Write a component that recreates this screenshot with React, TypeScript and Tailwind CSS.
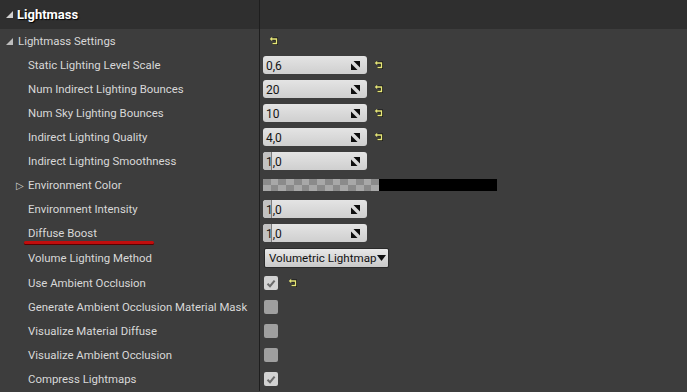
import React from 'react';

const ResetIcon: React.FC = () => (
    <svg width="11" height="10" viewBox="0 0 11 10" className="shrink-0">
        <path d="M2.5 3 H7.5 V7.5 H3.5" fill="none" stroke="#151515" strokeWidth="3" />
        <path d="M2.5 3 H7.5 V7.5 H3.5" fill="none" stroke="#e6e678" strokeWidth="1.4" />
        <path d="M0.8 3 L3.2 0.8 V5.2 Z" fill="#e6e678" />
    </svg>
)

const SpinIcon: React.FC = () => (
    <svg width="9" height="9" viewBox="0 0 9 9" className="shrink-0">
        <polygon points="0,2.5 0,9 6.5,9" fill="#0d0d0d" />
        <polygon points="2.5,0 9,0 9,6.5" fill="#0d0d0d" />
    </svg>
)

const NumberBox: React.FC<{ value: string; slider?: boolean }> = ({ value, slider }) => (
    <div className="relative flex h-[18px] w-[104px] items-center overflow-hidden rounded-[3px] bg-gradient-to-b from-[#e4e4e4] to-[#cfcfcf] pl-[3px] pr-[7px]">
        {slider && (
            <div className="absolute left-0 top-0 h-full w-[9px] border-r border-[#7d7d7d] bg-[#c2c2c2]" />
        )}
        <span className="relative flex-1 pt-px text-[12px] text-[#151515]">{value}</span>
        <SpinIcon />
    </div>
)

const CheckBox: React.FC<{ checked?: boolean }> = ({ checked }) => (
    <div className={`flex h-[14px] w-[14px] items-center justify-center rounded-[2px] ${checked ? 'bg-[#d2d2d2]' : 'bg-[#9f9f9f]'}`}>
        {checked && (
            <svg width="10" height="9" viewBox="0 0 10 9">
                <path d="M1.5 4.8 L4 7.2 L8.6 1.6" fill="none" stroke="#6a6a6a" strokeWidth="2" />
            </svg>
        )}
    </div>
)

type Row = {
    label: string;
    value: React.ReactNode;
    h?: string;
    expand?: boolean;
    mark?: boolean;
}

const rows: Row[] = [
    { label: 'Static Lighting Level Scale', value: <><NumberBox value="0,6" /><ResetIcon /></> },
    { label: 'Num Indirect Lighting Bounces', value: <><NumberBox value="20" /><ResetIcon /></> },
    { label: 'Num Sky Lighting Bounces', value: <><NumberBox value="10" /><ResetIcon /></> },
    { label: 'Indirect Lighting Quality', value: <><NumberBox value="4,0" /><ResetIcon /></> },
    { label: 'Indirect Lighting Smoothness', value: <NumberBox value="1,0" slider /> },
    {
        label: 'Environment Color', expand: true, value: (
            <div className="flex h-[12px] w-[234px]">
                <div className="grid h-full w-[116px] grid-cols-[repeat(15,1fr)] grid-rows-2">
                    {Array.from({ length: 30 }).map((_, i) => (
                        <span key={i} className={(Math.floor(i / 15) + (i % 15)) % 2 === 0 ? 'bg-[#8b8b8b]' : 'bg-[#a8a8a8]'} />
                    ))}
                </div>
                <div className="h-full flex-1 bg-black" />
            </div>
        )
    },
    { label: 'Environment Intensity', value: <NumberBox value="1,0" slider /> },
    { label: 'Diffuse Boost', value: <NumberBox value="1,0" slider />, mark: true },
    {
        label: 'Volume Lighting Method', h: 'h-[26px]', value: (
            <div className="ml-px flex h-[20px] items-center gap-[1px] rounded-[2px] border border-[#2a2a2a] bg-gradient-to-b from-[#e8e8e8] to-[#c9c9c9] pl-[4px] pr-[2px]">
                <span className="pt-px text-[11.6px] text-[#111]">Volumetric Lightmap</span>
                <svg width="9" height="6" viewBox="0 0 9 6"><polygon points="0,0 9,0 4.5,6" fill="#111" /></svg>
            </div>
        )
    },
    { label: 'Use Ambient Occlusion', value: <div className="ml-px flex items-center gap-[10px]"><CheckBox checked /><ResetIcon /></div> },
    { label: 'Generate Ambient Occlusion Material Mask', value: <div className="ml-px"><CheckBox /></div> },
    { label: 'Visualize Material Diffuse', value: <div className="ml-px"><CheckBox /></div> },
    { label: 'Visualize Ambient Occlusion', value: <div className="ml-px"><CheckBox /></div> },
    { label: 'Compress Lightmaps', value: <div className="ml-px"><CheckBox checked /></div> },
]

const App: React.FC = () => {
    return (
        <div className="flex h-[392px] w-[687px] flex-col overflow-hidden bg-[#3d3d3d] font-['Roboto',sans-serif] text-[11.4px] text-[#d8d8d8]">
            <div className="flex h-[29px] shrink-0 bg-[#2f2f2f]">
                <div className="flex w-[260px] items-center gap-[4px] border-r border-[#1e1e1e] pl-[6px]">
                    <svg width="7" height="7" viewBox="0 0 7 7"><polygon points="7,0 7,7 0,7" fill="#cfcfcf" /></svg>
                    <span className="text-[13px] font-bold text-white [text-shadow:1px_1px_1px_#000]">Lightmass</span>
                </div>
                <div className="flex-1" />
            </div>
            <div className="flex h-[24px] shrink-0">
                <div className="flex w-[260px] items-center gap-[5px] border-r border-[#1e1e1e] pl-[6px]">
                    <svg width="7" height="7" viewBox="0 0 7 7"><polygon points="7,0 7,7 0,7" fill="#bdbdbd" /></svg>
                    <span className="pt-[2px]">Lightmass Settings</span>
                </div>
                <div className="flex items-center pl-[9px]">
                    <ResetIcon />
                </div>
            </div>
            {rows.map((r) => (
                <div key={r.label} className={`flex shrink-0 ${r.h ?? 'h-[24px]'}`}>
                    <div className="relative flex w-[260px] items-center border-r border-[#1e1e1e] pl-[16px]">
                        <span className="w-[12px] text-[10px] text-[#cfcfcf]">{r.expand ? '▷' : ''}</span>
                        <span className="pt-[2px]">{r.label}</span>
                        {r.mark && (
                            <div className="absolute bottom-[1px] left-[24px] h-[3px] w-[130px] rounded-full bg-[#c00d0d] shadow-[0_1px_0_#5a0000]" />
                        )}
                    </div>
                    <div className="flex items-center gap-[7px] pl-[3px]">
                        {r.value}
                    </div>
                </div>
            ))}
        </div>
    );
}

export default App
